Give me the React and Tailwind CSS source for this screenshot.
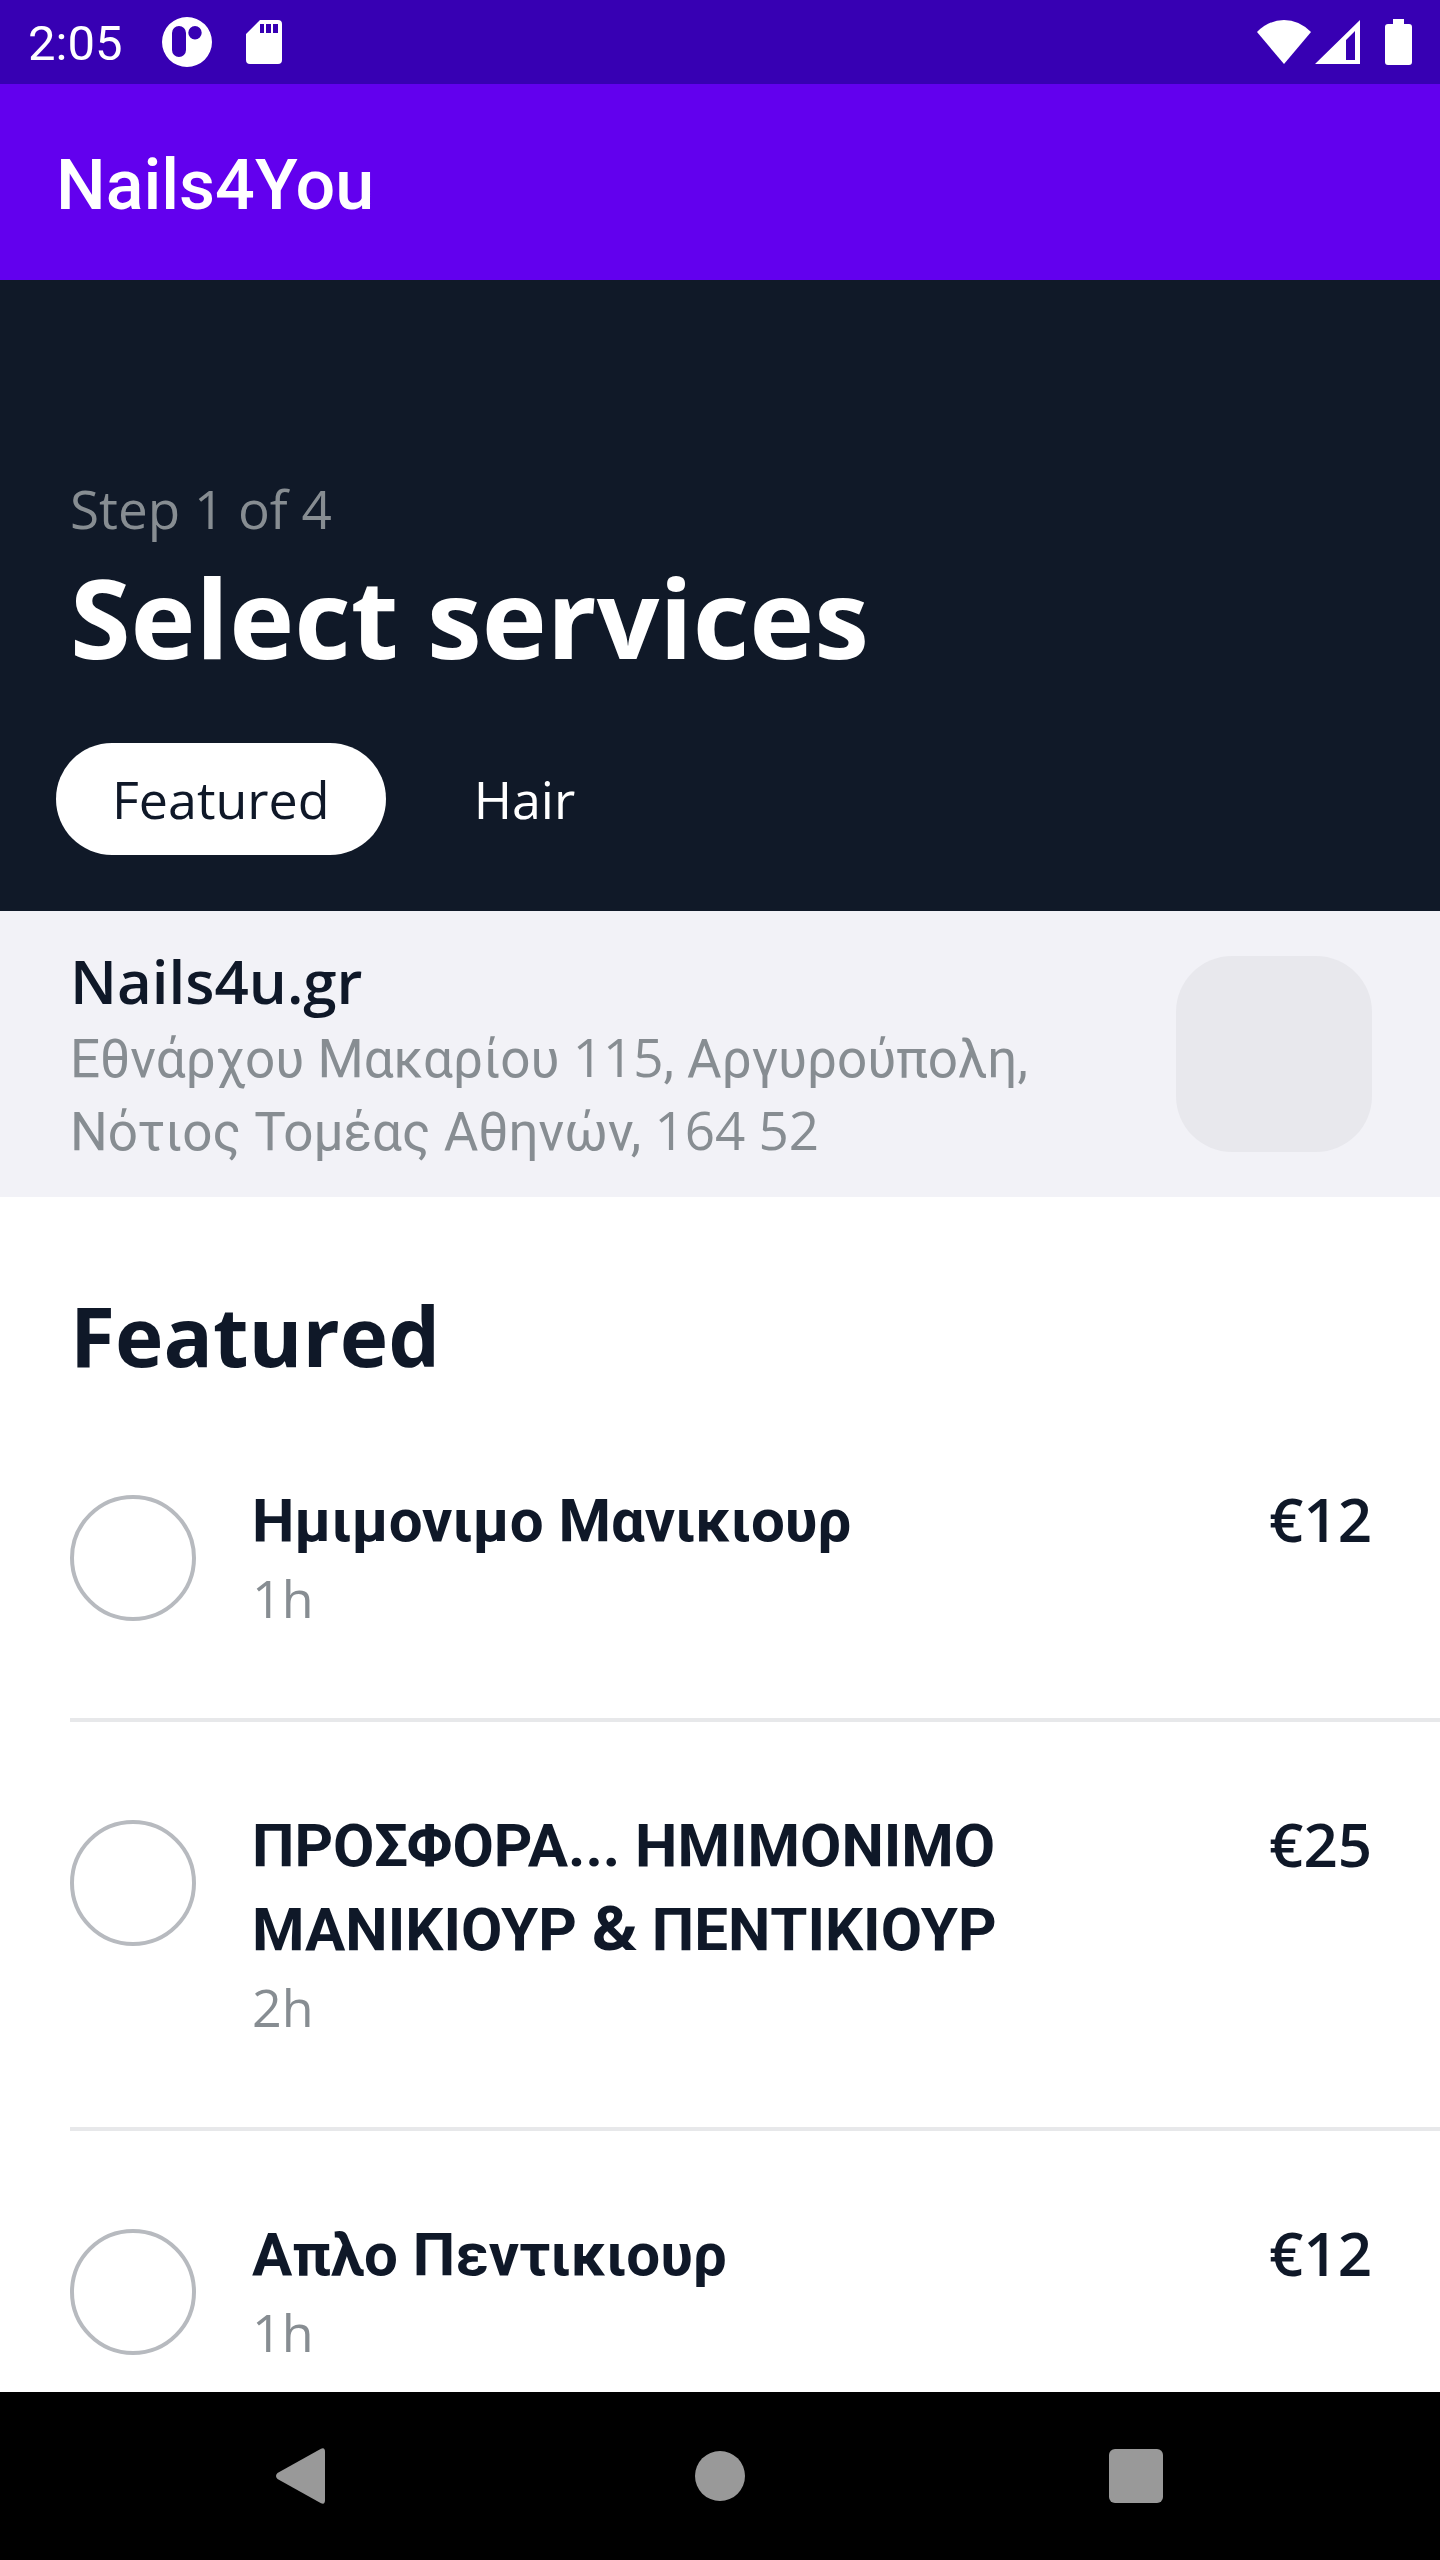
import { Fragment, useState } from "react";

const tabs = ["Featured", "Hair"];

const services = [
  { id: 1, name: "Ημιμονιμο Μανικιουρ", duration: "1h", price: "€12" },
  { id: 2, name: "ΠΡΟΣΦΟΡΑ... ΗΜΙΜΟΝΙΜΟ ΜΑΝΙΚΙΟΥΡ & ΠΕΝΤΙΚΙΟΥΡ", duration: "2h", price: "€25" },
  { id: 3, name: "Απλο Πεντικιουρ", duration: "1h", price: "€12" },
];

// Greek is set in Roboto by the parent, digits and the ampersand in the brand font
function mixedText(text) {
  return text.split(/(\d+|&)/).map((part, i) =>
    i % 2 ? (
      <span key={i} className="font-['Open_Sans',sans-serif] leading-none">{part}</span>
    ) : (
      <Fragment key={i}>{part}</Fragment>
    )
  );
}

function StatusBar() {
  return (
    <div className="flex h-[84px] shrink-0 items-center justify-between bg-[#3700b3] px-7 text-white">
      <div className="flex items-center">
        <span className="pt-1 font-['Roboto',sans-serif] text-[49px] leading-[56px]">2:05</span>
        <svg className="ml-10 h-[50px] w-[50px]" viewBox="0 0 50 50" fill="currentColor">
          <path
            fillRule="evenodd"
            d="M25 0a25 25 0 1 1 0 50a25 25 0 1 1 0-50zM17 9a7 7 0 0 0-7 7v17a7 7 0 0 0 14 0V16a7 7 0 0 0-7-7zM33 9a6.700 6.700 0 1 0 0 13.400a6.700 6.700 0 1 0 0-13.400z"
          />
        </svg>
        <svg className="ml-[34px] h-[46px] w-9" viewBox="0 0 36 46" fill="currentColor">
          <path
            fillRule="evenodd"
            d="M14 1H32q4 0 4 4V41q0 4-4 4H4q-4 0-4-4V15zM14 5v9h4V5zM20 5v9h5V5zM27 5v9h5V5z"
          />
        </svg>
      </div>
      <div className="flex items-center">
        <svg className="h-[46px] w-[54px]" viewBox="0 0 54 46" fill="currentColor">
          <path d="M0 13Q12 1 27 1T54 13L27 45z" />
        </svg>
        <svg className="ml-1 h-[46px] w-[45px]" viewBox="0 0 45 46" fill="currentColor">
          <path fillRule="evenodd" d="M45 1V45H0zM40 12L31 21V41H40z" />
        </svg>
        <svg className="ml-6 h-[46px] w-7" viewBox="0 0 28 46" fill="currentColor">
          <path d="M9 0H20V5H25q3 0 3 3V43q0 3-3 3H4q-3 0-3-3V8q0-3 3-3H9z" />
        </svg>
      </div>
    </div>
  );
}

function ServiceRow({ service, checked, onToggle }) {
  const inputId = `service-${service.id}`;
  return (
    <li className="flex items-start border-b-4 border-[#e7e8ea] py-[82px] pr-[68px] last:border-none">
      <input
        id={inputId}
        type="checkbox"
        checked={checked}
        onChange={onToggle}
        className="mt-4 h-[126px] w-[126px] shrink-0 appearance-none rounded-full border-4 border-[#b7babf] checked:border-[#6200ee] checked:bg-[#6200ee]"
      />
      <label htmlFor={inputId} className="ml-14 flex-1">
        <span className="block font-['Roboto',sans-serif] text-[60px] font-bold leading-[84px]">
          {mixedText(service.name)}
        </span>
        <span className="block pb-1 text-[52px] leading-[69px] text-[#878d92]">{service.duration}</span>
      </label>
      <span className="ml-14 text-[60px] font-semibold leading-[80px]">{service.price}</span>
    </li>
  );
}

function NavBar() {
  return (
    <nav className="grid h-[168px] shrink-0 grid-cols-3 bg-black px-24 text-[#999]">
      <button type="button" aria-label="Back" className="flex items-center justify-center">
        <svg className="h-14 w-14" viewBox="0 0 56 56" fill="currentColor">
          <path d="M1.500 25L45 .800Q49 -1 49 4V52Q49 57 45 55.200L1.500 31Q-1.500 28 1.500 25z" />
        </svg>
      </button>
      <button type="button" aria-label="Home" className="flex items-center justify-center">
        <span className="h-[50px] w-[50px] rounded-full bg-[#999]" />
      </button>
      <button type="button" aria-label="Recent apps" className="flex items-center justify-center">
        <span className="h-[54px] w-[54px] rounded-md bg-[#999]" />
      </button>
    </nav>
  );
}

export default function App() {
  const [activeTab, setActiveTab] = useState("Featured");
  const [selected, setSelected] = useState([]);

  const toggle = (id) =>
    setSelected((prev) => (prev.includes(id) ? prev.filter((s) => s !== id) : [...prev, id]));

  return (
    <div className="flex h-screen flex-col bg-white font-['Open_Sans',sans-serif] text-[#0f1828]">
      <StatusBar />

      <header className="flex h-[196px] shrink-0 items-center bg-[#6200ee] px-14 pt-1.5">
        <span className="font-['Roboto',sans-serif] text-[70px] font-medium leading-[84px] text-white">
          Nails4You
        </span>
      </header>

      <main className="min-h-0 flex-1 overflow-y-auto [scrollbar-width:none]">
        <section className="bg-[#101928] px-14 pb-14 pt-[192px] text-white">
          <p className="px-[14px] text-[53px] leading-[73px] text-[#878d92]">Step 1 of 4</p>
          <h1 className="px-[14px] text-[110px] font-bold leading-[142px]">Select services</h1>
          <div className="mt-14 flex gap-8">
            {tabs.map((tab) => (
              <button
                key={tab}
                type="button"
                onClick={() => setActiveTab(tab)}
                className={
                  tab === activeTab
                    ? "h-28 rounded-full bg-white px-14 text-[52px] text-[#0f1828]"
                    : "h-28 rounded-full px-14 text-[52px] text-white"
                }
              >
                {tab}
              </button>
            ))}
          </div>
        </section>

        <section className="flex items-center justify-between bg-[#f2f2f7] py-7 pl-[70px] pr-[68px]">
          <div className="flex-1">
            <h2 className="text-[60px] font-semibold leading-[84px]">Nails4u.gr</h2>
            <p className="font-['Roboto',sans-serif] text-[53px] leading-[73px] text-[#878d92]">
              {mixedText("Εθνάρχου Μακαρίου 115, Αργυρούπολη, Νότιος Τομέας Αθηνών, 164 52")}
            </p>
          </div>
          <div className="ml-14 h-[196px] w-[196px] shrink-0 rounded-[56px] bg-[#e8e8ed]" />
        </section>

        <section className="pl-[70px]">
          <h2 className="pb-1 pt-20 text-[82px] font-bold leading-[116px]">Featured</h2>
          <ul>
            {services.map((service) => (
              <ServiceRow
                key={service.id}
                service={service}
                checked={selected.includes(service.id)}
                onToggle={() => toggle(service.id)}
              />
            ))}
          </ul>
        </section>
      </main>

      <NavBar />
    </div>
  );
}
